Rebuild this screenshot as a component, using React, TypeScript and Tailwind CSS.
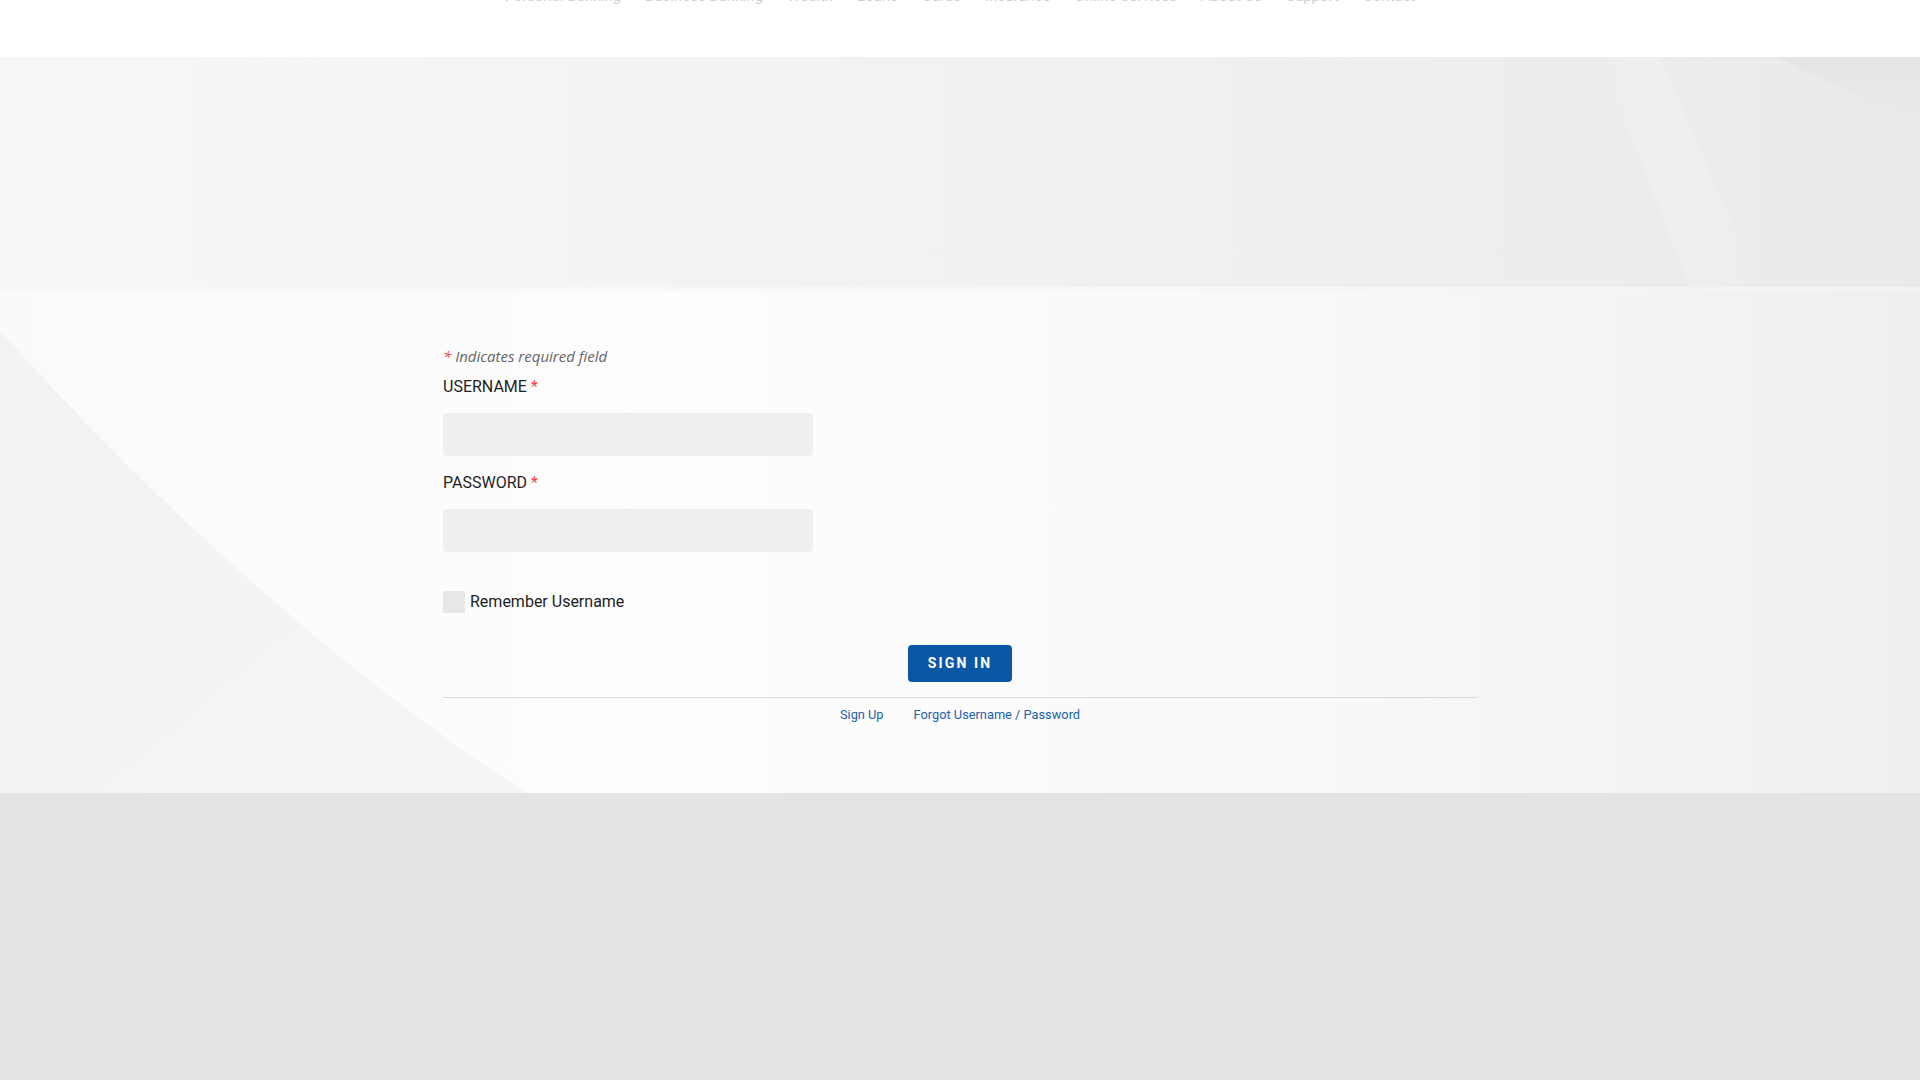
import { useState } from 'react'

const navItems = [
  'Personal Banking',
  'Business Banking',
  'Wealth',
  'Loans',
  'Cards',
  'Insurance',
  'Online Services',
  'About Us',
  'Support',
  'Contact',
]

function RequiredMark() {
  return <span className="ml-1 text-[#f0413d]">*</span>
}

function Field({ label, type }: { label: string; type: string }) {
  return (
    <div className="flex flex-col">
      <label className="text-[16px] leading-[20px] text-[#1e1e1e]">
        {label}
        <RequiredMark />
      </label>
      <input
        type={type}
        className="mt-4 h-[43px] w-[370px] rounded-[4px] bg-[#efefef] px-3 text-[16px] outline-none"
      />
    </div>
  )
}

export default function App() {
  const [remember, setRemember] = useState(false)

  return (
    <div className="flex min-h-screen flex-col bg-[#e4e4e4] font-['Roboto',sans-serif]">
      {/* top nav, scrolled mostly out of view */}
      <header className="h-[57px] overflow-hidden bg-white">
        <nav className="-mt-[14px] flex justify-center gap-6 text-[15px] leading-[20px] text-[#d0d0d0]">
          {navItems.map((item) => (
            <span key={item}>{item}</span>
          ))}
        </nav>
      </header>

      {/* hero band */}
      <section className="relative h-[230px] overflow-hidden bg-[linear-gradient(to_right,#f7f7f7,#f1f1f1_55%,#eaeaea)]">
        <svg
          className="absolute inset-0 h-full w-full"
          viewBox="0 0 1920 230"
          preserveAspectRatio="none"
        >
          <defs>
            <linearGradient id="heroBand" x1="0" x2="1" y1="0" y2="0">
              <stop offset="0" stopColor="#ffffff" stopOpacity="0" />
              <stop offset="0.5" stopColor="#f2f4f3" stopOpacity="0.35" />
              <stop offset="1" stopColor="#ffffff" stopOpacity="0" />
            </linearGradient>
            <linearGradient id="heroCorner" x1="0" x2="0" y1="0" y2="1">
              <stop offset="0" stopColor="#e4e4e4" stopOpacity="0.9" />
              <stop offset="1" stopColor="#e8e8e8" stopOpacity="0" />
            </linearGradient>
          </defs>
          <polygon points="1600,0 1660,0 1760,230 1690,230" fill="url(#heroBand)" />
          <path d="M1775,0 L1920,0 L1920,75 C1880,50 1830,25 1775,0 Z" fill="url(#heroCorner)" />
        </svg>
      </section>

      {/* sign-in panel */}
      <section className="relative h-[506px] bg-[linear-gradient(to_right,#fafafa,#fdfdfd_35%,#f8f8f8_70%,#efefef)]">
        <svg
          className="absolute inset-0 h-full w-full"
          viewBox="0 0 1920 506"
          preserveAspectRatio="none"
        >
          <defs>
            <linearGradient id="panelShade" x1="0" x2="1" y1="0" y2="1">
              <stop offset="0" stopColor="#f2f2f2" />
              <stop offset="1" stopColor="#f5f5f5" />
            </linearGradient>
          </defs>
          <path d="M0,44 C140,200 330,380 527,506 L0,506 Z" fill="url(#panelShade)" />
          <rect x="0" y="0" width="1920" height="5" fill="#f5f5f5" opacity="0.6" />
        </svg>

        <form
          className="relative mx-auto flex w-[1034px] flex-col pt-[58px]"
          onSubmit={(e) => e.preventDefault()}
        >
          <p className="font-['Open_Sans',sans-serif] text-[15px] italic leading-[22px] text-[#666]">
            <span className="text-[#f0413d]">*</span> Indicates required field
          </p>

          <div className="mt-[10px]">
            <Field label="USERNAME" type="text" />
          </div>
          <div className="mt-[17px]">
            <Field label="PASSWORD" type="password" />
          </div>

          <label className="mt-[39px] flex cursor-pointer items-center gap-[5px]">
            <input
              type="checkbox"
              checked={remember}
              onChange={(e) => setRemember(e.target.checked)}
              className="h-[22px] w-[22px] appearance-none rounded-none bg-[#e8e8e8] checked:bg-[#0a58a5]"
            />
            <span className="text-[16px] leading-[20px] text-[#1e1e1e]">Remember Username</span>
          </label>

          <div className="mt-8 flex justify-center">
            <button
              type="submit"
              className="h-[37px] w-[104px] rounded-[4px] bg-[#0a58a5] text-[14px] font-bold tracking-[0.15em] text-white"
            >
              SIGN IN
            </button>
          </div>

          <div className="mt-[15px] h-px bg-[#dadada]" />

          <div className="mt-[9px] flex justify-center gap-[30px] text-[12.8px] leading-[16px] text-[#1c5fab]">
            <a href="#" className="hover:underline">
              Sign Up
            </a>
            <a href="#" className="hover:underline">
              Forgot Username / Password
            </a>
          </div>
        </form>
      </section>

      <div className="flex-1 bg-[#e4e4e4]" />
    </div>
  )
}
